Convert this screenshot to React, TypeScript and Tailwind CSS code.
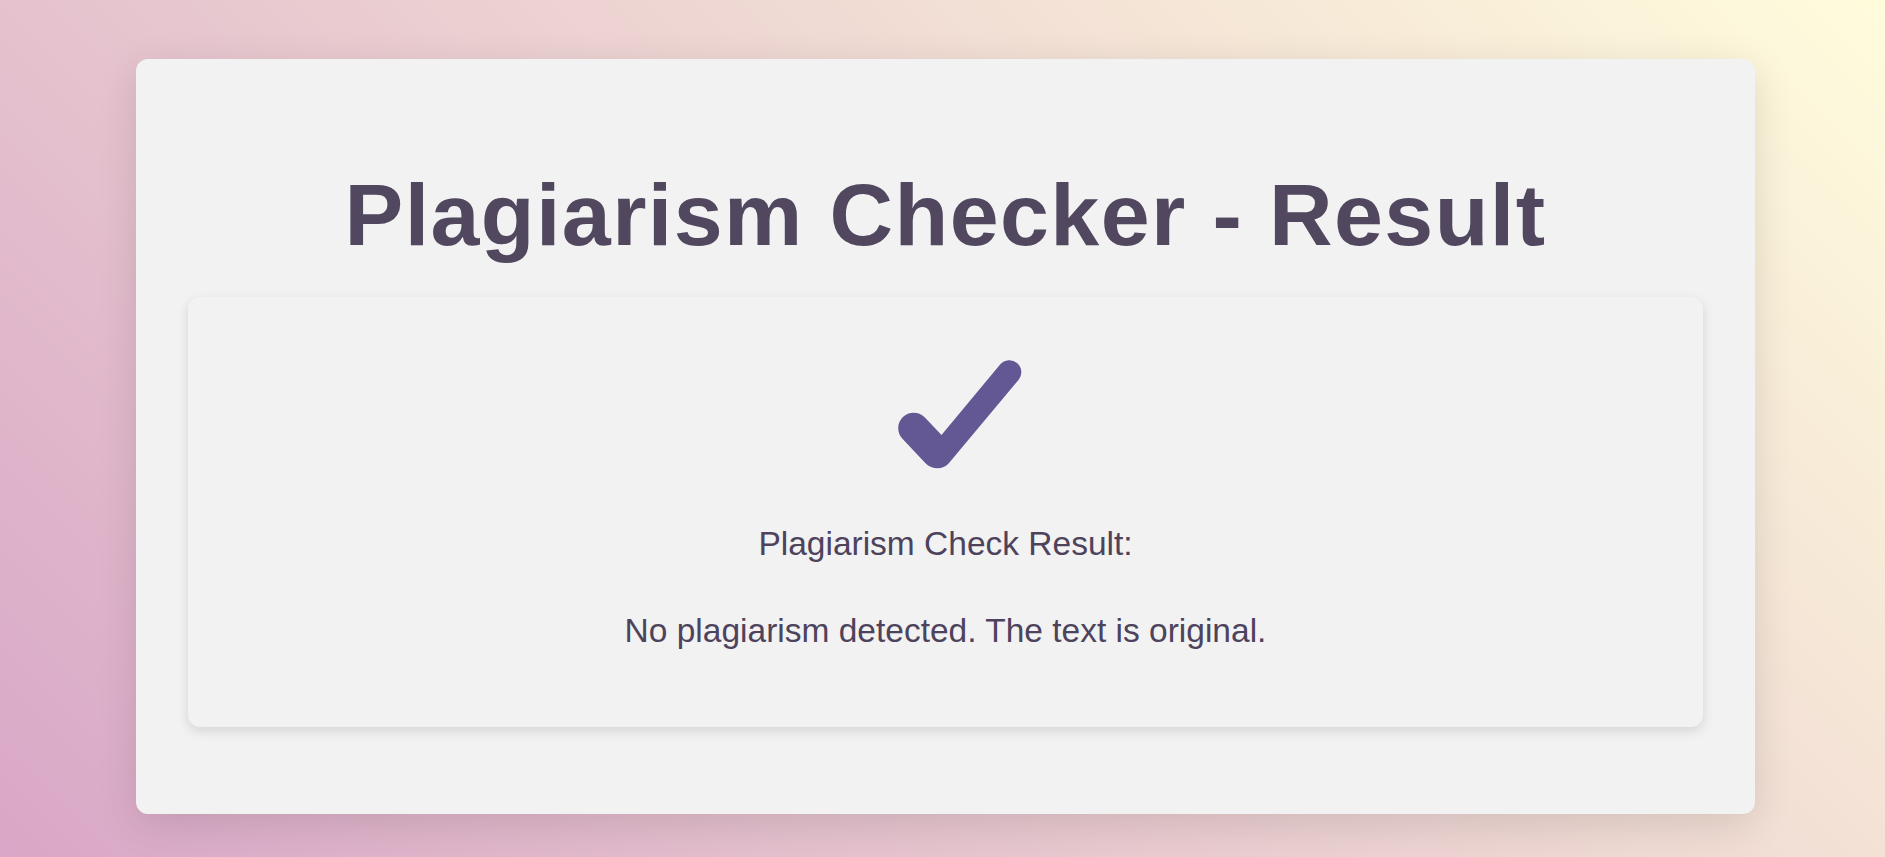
import React from "react";

const CheckMark = () => (
  <svg width="160" height="120" viewBox="0 0 160 120" className="block">
    <path
      d="M75.5 80 L134.3 9.3 A12 12 0 0 1 152.7 24.7 L82.8 108.3 C77 115.2 65.8 114.8 59.5 108.3 L36.2 83.5 A15.5 15.5 0 0 1 58.4 61.9 Z"
      fill="#635894"
    />
  </svg>
);

export default function App() {
  return (
    <div className="min-h-screen h-[857px] bg-[linear-gradient(45deg,#d9a7c7,#fffcdc)] pt-[59px] pl-[136px] font-['Liberation_Sans',Arial,sans-serif]">
      <div className="w-[1619px] h-[755px] bg-[#f2f2f2] rounded-[12px] shadow-[0_10px_40px_rgba(0,0,0,0.12)] px-[52px] pt-[107px]">
        <h1 className="text-center text-[88px] leading-[98px] font-bold tracking-[1.4px] text-[#51475f]">
          Plagiarism Checker - Result
        </h1>

        {/* result panel */}
        <div className="mt-[33px] h-[430px] bg-[#f2f2f2] rounded-[12px] shadow-[0_4px_12px_rgba(0,0,0,0.12)] flex flex-col items-center pt-[58px]">
          <CheckMark />
          <p className="mt-[49px] text-[33.5px] leading-[40px] text-[#4d435c]">Plagiarism Check Result:</p>
          <p className="mt-[47px] text-[33.5px] leading-[40px] text-[#4d435c]">
            No plagiarism detected. The text is original.
          </p>
        </div>
      </div>
    </div>
  );
}
